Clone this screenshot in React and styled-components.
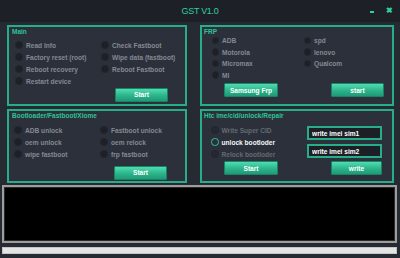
import React from 'react'
import styled, { createGlobalStyle } from 'styled-components'

const Global = createGlobalStyle`
  html, body { margin: 0; padding: 0; background: #262a32; }
  * { box-sizing: border-box; }
`

const Window = styled.div`
  width: 400px;
  height: 258px;
  overflow: hidden;
  background: #262a32;
  font-family: "Liberation Sans", Arial, sans-serif;
  display: flex;
  flex-direction: column;
`

const TitleBar = styled.div`
  height: 22px;
  background: #1d2127;
  display: grid;
  grid-template-columns: 1fr auto 1fr;
  align-items: center;
  color: #2fcf9f;
`

const Title = styled.div`
  grid-column: 2;
  font-size: 9px;
  letter-spacing: -0.3px;
`

const Controls = styled.div`
  display: flex;
  justify-content: flex-end;
  align-items: center;
  gap: 12px;
  padding-right: 7px;
  font-weight: bold;
`

const Minimize = styled.span`
  width: 4px;
  height: 1.5px;
  background: #2fcf9f;
  margin-top: 2px;
`

const Close = styled.span`
  font-size: 8px;
  line-height: 8px;
`

const Body = styled.div`
  display: grid;
  grid-template-columns: 180px 194px;
  grid-template-rows: 81px 74px;
  column-gap: 13px;
  row-gap: 3px;
  padding: 3px 0 0 7px;
`

const Panel = styled.section`
  border: 2px solid #27ad88;
  background: #2b303a;
  display: flex;
  flex-direction: column;
`

const PanelTitle = styled.div`
  font-size: 6.5px;
  font-weight: bold;
  color: #2cc596;
  line-height: 9px;
  padding-left: ${p => p.$pad ?? 3}px;
`

const OptionGrid = styled.div`
  display: grid;
  grid-template-columns: ${p => p.$col}px auto;
  grid-auto-rows: ${p => p.$row}px;
  align-items: start;
  margin-top: ${p => p.$top}px;
  padding-left: ${p => p.$left}px;
`

const OptionList = styled.div`
  display: flex;
  flex-direction: column;
  width: ${p => p.$width}px;
`

const Option = styled.label`
  display: flex;
  align-items: center;
  gap: ${p => p.$gap ?? 3.5}px;
  height: ${p => p.$h ?? 12}px;
  font-size: 6.6px;
  font-weight: bold;
  white-space: nowrap;
  color: ${p => (p.$active ? '#f4f6f8' : p.$dim ? '#656a73' : '#848992')};
`

const Radio = styled.span`
  width: 7.5px;
  height: 7.5px;
  border-radius: 50%;
  flex: none;
  background: ${p => (p.$checked ? 'transparent' : p.$dim ? '#24282f' : '#1d2127')};
  border: ${p => (p.$checked ? '1.5px solid #2cc596' : '0.5px solid #22262d')};
`

const ButtonCell = styled.div`
  grid-column: 2;
  padding-left: ${p => p.$left}px;
  padding-top: ${p => p.$top}px;
`

const ButtonRow = styled.div`
  display: flex;
  gap: 53px;
  padding-left: 22px;
  margin-top: ${p => p.$top}px;
`

const ActionButton = styled.button`
  width: ${p => p.$w}px;
  height: 14px;
  border: 1px solid #178466;
  border-radius: 1px;
  background: linear-gradient(#4fdcb0, #2cb48b 55%, #1f9a77);
  color: #ffffff;
  font-family: inherit;
  font-size: 6.6px;
  font-weight: bold;
  padding: 0;
  cursor: pointer;
`

const HtcBody = styled.div`
  display: flex;
  align-items: flex-start;
  padding-left: 9px;
  margin-top: 4px;
`

const InputStack = styled.div`
  display: flex;
  flex-direction: column;
  gap: 4px;
  margin-top: 2px;
`

const ImeiInput = styled.input`
  width: 75px;
  height: 14px;
  background: #1c1f26;
  border: 2px solid #27ad88;
  color: #ffffff;
  font-family: inherit;
  font-size: 6.6px;
  font-weight: bold;
  padding: 0 0 0 3px;
  outline: none;
`

const LogBox = styled.div`
  width: 395px;
  height: 58px;
  margin: 2px 0 0 2px;
  background: #000;
  border: 2px solid #9d9d9d;
  box-shadow: inset 0 0 0 1px #2b2b2b;
`

const Progress = styled.div`
  width: 395px;
  height: 7px;
  margin: 4px 0 0 2px;
  background: #e4e4e4;
  border: 1px solid #c4c4c4;
`

const Opt = ({ children, ...rest }) => (
  <Option {...rest}>
    <Radio $checked={rest.$active} $dim={rest.$dim} />
    {children}
  </Option>
)

export default function App() {
  return (
    <>
      <Global />
      <Window>
        <TitleBar>
          <Title>GST V1.0</Title>
          <Controls>
            <Minimize />
            <Close>✖</Close>
          </Controls>
        </TitleBar>

        <Body>
          <Panel>
            <PanelTitle>Main</PanelTitle>
            <OptionGrid $col={86} $row={12} $top={3} $left={6}>
              <Opt>Read Info</Opt>
              <Opt>Check Fastboot</Opt>
              <Opt>Factory reset (root)</Opt>
              <Opt>Wipe data (fastboot)</Opt>
              <Opt>Reboot recovery</Opt>
              <Opt>Reboot Fastboot</Opt>
              <Opt>Restart device</Opt>
              <ButtonCell $left={14} $top={8}>
                <ActionButton $w={53}>Start</ActionButton>
              </ButtonCell>
            </OptionGrid>
          </Panel>

          <Panel>
            <PanelTitle $pad={2}>FRP</PanelTitle>
            <OptionGrid $col={92} $row={11.5} $top={-1.5} $left={9.5}>
              <Opt $gap={3}>ADB</Opt>
              <Opt $gap={3}>spd</Opt>
              <Opt $gap={3}>Motorola</Opt>
              <Opt $gap={3}>lenovo</Opt>
              <Opt $gap={3}>Micromax</Opt>
              <Opt $gap={3}>Qualcom</Opt>
              <Opt $gap={3}>MI</Opt>
            </OptionGrid>
            <ButtonRow $top={2.5}>
              <ActionButton $w={54}>Samsung Frp</ActionButton>
              <ActionButton $w={53}>start</ActionButton>
            </ButtonRow>
          </Panel>

          <Panel>
            <PanelTitle>Bootloader/Fastboot/Xiome</PanelTitle>
            <OptionGrid $col={86} $row={12} $top={4} $left={5}>
              <Opt>ADB unlock</Opt>
              <Opt>Fastboot unlock</Opt>
              <Opt>oem unlock</Opt>
              <Opt>oem relock</Opt>
              <Opt>wipe fastboot</Opt>
              <Opt>frp fastboot</Opt>
              <ButtonCell $left={14} $top={1}>
                <ActionButton $w={53}>Start</ActionButton>
              </ButtonCell>
            </OptionGrid>
          </Panel>

          <Panel>
            <PanelTitle $pad={2}>Htc ime/cid/unlock/Repair</PanelTitle>
            <HtcBody>
              <OptionList $width={96}>
                <Opt $gap={3} $dim>Write Super CID</Opt>
                <Opt $gap={3} $active>unlock bootloder</Opt>
                <Opt $gap={3} $dim>Relock bootloder</Opt>
              </OptionList>
              <InputStack>
                <ImeiInput defaultValue="write imei sim1" />
                <ImeiInput defaultValue="write imei sim2" />
              </InputStack>
            </HtcBody>
            <ButtonRow $top={1}>
              <ActionButton $w={54}>Start</ActionButton>
              <ActionButton $w={51}>write</ActionButton>
            </ButtonRow>
          </Panel>
        </Body>

        <LogBox />
        <Progress />
      </Window>
    </>
  )
}
